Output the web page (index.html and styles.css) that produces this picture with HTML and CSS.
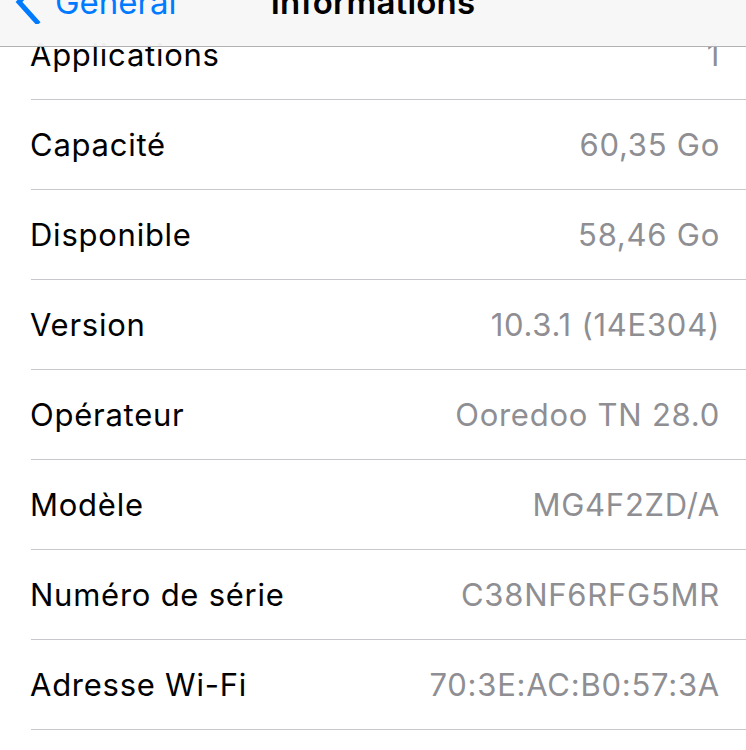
FILE: index.html
```html
<!DOCTYPE html>
<html lang="fr">
<head>
<meta charset="utf-8">
<title>Informations</title>
<link rel="stylesheet" href="styles.css">
</head>
<body>
<div class="screen">
  <header class="navbar">
    <div class="nav-inner">
      <a class="back">
        <svg class="chev" width="26" height="44" viewBox="0 0 26 44"><path d="M22 2 L4 22 L22 42" fill="none" stroke="#007aff" stroke-width="5" stroke-linecap="square" stroke-linejoin="miter"/></svg>
        <span class="back-label">Général</span>
      </a>
      <div class="title">Informations</div>
    </div>
  </header>
  <ul class="list">
    <li class="row"><span class="label">Applications</span><span class="value">1</span></li>
    <li class="row"><span class="label">Capacité</span><span class="value">60,35 Go</span></li>
    <li class="row"><span class="label">Disponible</span><span class="value">58,46 Go</span></li>
    <li class="row"><span class="label">Version</span><span class="value">10.3.1 (14E304)</span></li>
    <li class="row"><span class="label">Opérateur</span><span class="value">Ooredoo TN 28.0</span></li>
    <li class="row"><span class="label">Modèle</span><span class="value">MG4F2ZD/A</span></li>
    <li class="row"><span class="label">Numéro de série</span><span class="value">C38NF6RFG5MR</span></li>
    <li class="row"><span class="label">Adresse Wi-Fi</span><span class="value">70:3E:AC:B0:57:3A</span></li>
  </ul>
</div>
</body>
</html>
```
FILE: styles.css
```css
html, body {
  margin: 0;
  padding: 0;
  background: #ffffff;
}
body {
  font-family: Inter, "Liberation Sans", sans-serif;
  -webkit-font-smoothing: antialiased;
}
.screen {
  position: relative;
  width: 746px;
  height: 750px;
  overflow: hidden;
  background: #ffffff;
}
.navbar {
  position: absolute;
  top: 0;
  left: 0;
  right: 0;
  height: 46px;
  background: rgba(247, 247, 248, 0.97);
  border-bottom: 1px solid #b2b2b2;
  z-index: 2;
  overflow: hidden;
}
.nav-inner {
  position: relative;
  height: 46px;
  margin-top: -15px;
  display: flex;
  align-items: flex-start;
}
.back {
  display: flex;
  align-items: flex-start;
  color: #007aff;
  padding-left: 15px;
}
.chev {
  display: block;
  margin-top: -5px;
}
.back-label {
  font-size: 33px;
  line-height: 34px;
  margin-left: 14px;
  letter-spacing: 0;
}
.title {
  position: absolute;
  left: 0;
  right: 0;
  top: 0;
  text-align: center;
  font-size: 33px;
  line-height: 34px;
  font-weight: 600;
  color: #000;
  letter-spacing: 0.2px;
}
.list {
  list-style: none;
  margin: 0;
  padding: 10px 0 0 0;
}
.row {
  margin-left: 31px;
  padding-right: 27px;
  height: 89px;
  border-bottom: 1px solid #c8c7cc;
  display: flex;
  align-items: center;
  justify-content: space-between;
  font-size: 31px;
  letter-spacing: 0.75px;
}
.label {
  color: #000;
  margin-left: -1px;
}
.value {
  color: #8e8e93;
  margin-right: -1px;
}
```
